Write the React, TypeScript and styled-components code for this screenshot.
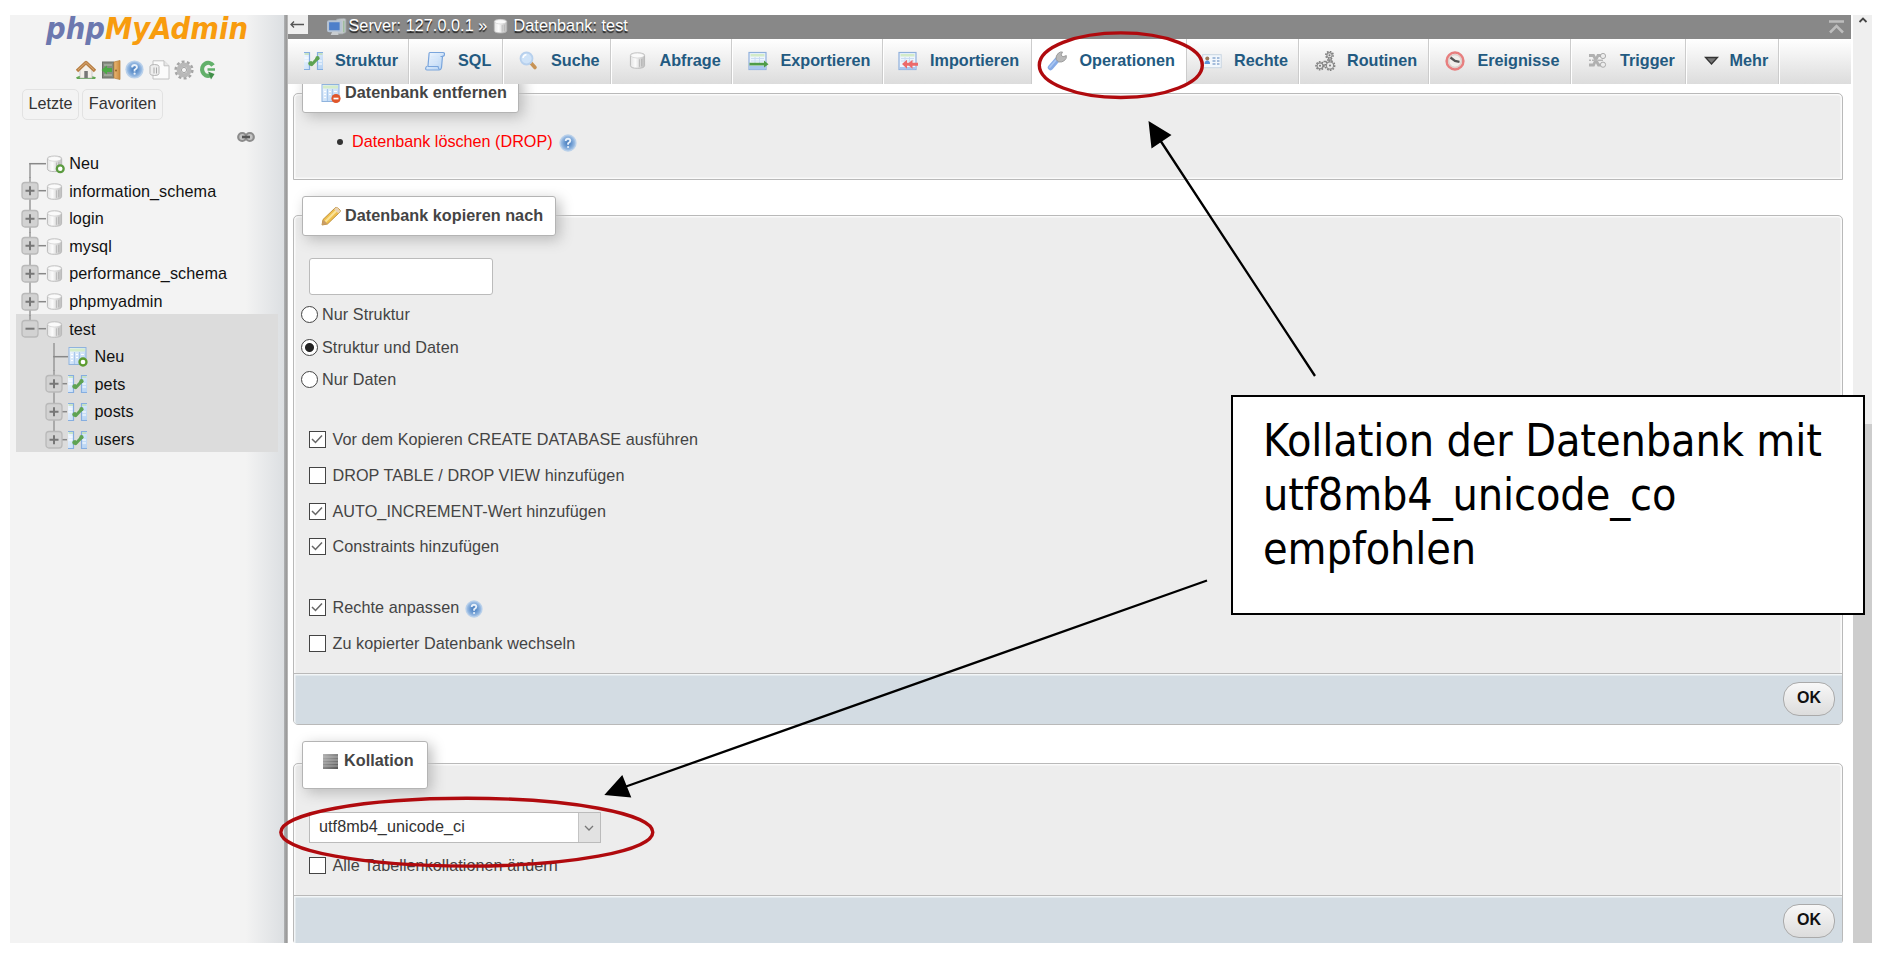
import React from "react";
import styled, { createGlobalStyle, css } from "styled-components";

const Global = createGlobalStyle`
  * { box-sizing: border-box; }
  body { margin: 0; background: #fff; font-family: "Liberation Sans", Arial, sans-serif; font-size: 16.2px; color: #444; }
`;

const Page = styled.div`
  position: relative;
  width: 1890px;
  height: 954px;
  padding: 15px 18px 11px 10px;
  overflow: hidden;
  background: #fff;
`;

const Window = styled.div`
  display: flex;
  height: 928px;
`;

/* ---------- Navigation ---------- */

const Sidebar = styled.aside`
  width: 274px;
  flex: none;
  display: flex;
  flex-direction: column;
  background: linear-gradient(90deg, #f3f3f3 0, #f3f3f3 86%, #dcdfe2 100%);
  color: #111;
`;

const Divider = styled.div`
  width: 4px;
  flex: none;
  background: linear-gradient(90deg, #b0b2b4, #999 60%, #c4c4c4);
`;

const Logo = styled.svg`
  display: block;
  margin-left: 34px;
  flex: none;
  overflow: visible;
`;

const IconBar = styled.div`
  display: flex;
  gap: 4.6px;
  height: 20px;
  margin: 8.5px 0 0 66px;
`;

const Shortcuts = styled.div`
  display: flex;
  gap: 3px;
  margin: 9px 0 0 12px;
`;

const Shortcut = styled.button<{ $w: number }>`
  width: ${(p) => p.$w}px;
  height: 31px;
  padding: 0 0 1px;
  border: 1.5px solid #e2e2e2;
  border-radius: 5px;
  background: #f3f3f3;
  color: #333;
  font: inherit;
`;

const LinkRow = styled.div`
  display: flex;
  justify-content: flex-end;
  height: 12px;
  margin: 11px 29px 7.3px 0;
`;

const Tree = styled.ul`
  list-style: none;
  margin: 0;
  padding: 0;
  letter-spacing: 0.07px;
`;

const Selected = styled.li`
  margin: -1px 6px 0 6px;
  padding-top: 1px;
  height: 138px;
  background: #dcdcdc;

  & > ul > li { margin-left: -6px; }
`;

const Row = styled.li<{ $nested?: boolean }>`
  display: flex;
  align-items: center;
  height: 27.6px;
  padding-left: ${(p) => (p.$nested ? 35 : 10.7)}px;
  white-space: nowrap;
  color: #111;
`;

const RowText = styled.span<{ $gap: number }>`
  margin-left: ${(p) => p.$gap}px;
`;

/* ---------- Main column ---------- */

const Main = styled.main`
  width: 1563px;
  flex: none;
  display: flex;
  flex-direction: column;
`;

const Crumbs = styled.header`
  display: flex;
  align-items: flex-start;
  height: 24px;
  flex: none;
  background: #888;
  color: #fff;
  text-shadow: 0 1.5px 1px #222;
`;

const BackBox = styled.div`
  width: 20px;
  height: 19px;
  margin-right: 19px;
  background: #efefef;
`;

const CrumbText = styled.span<{ $w: number }>`
  width: ${(p) => p.$w}px;
  padding-left: 1.5px;
  line-height: 20.5px;
  letter-spacing: 0.06px;
  white-space: nowrap;
`;

const ToTop = styled.div`
  margin: 4px 7px 0 auto;
  height: 14px;
`;

const Tabs = styled.nav`
  display: flex;
  height: 45px;
  flex: none;
  background: linear-gradient(#fff, #dcdcdc);
`;

const Tab = styled.a<{ $w: number; $icon: number; $active?: boolean }>`
  display: flex;
  align-items: center;
  width: ${(p) => p.$w}px;
  padding-left: ${(p) => p.$icon}px;
  padding-bottom: 1.5px;
  color: #235a81;
  font-weight: bold;
  white-space: nowrap;
  border-right: 1.5px solid #fff;
  box-shadow: inset -1px 0 0 #ccc;
  ${(p) =>
    p.$active &&
    css`
      background: #fff;
      box-shadow: none;
      border-right: 1px solid #ccc;
    `}
`;

const TabIcon = styled.span<{ $w: number }>`
  width: ${(p) => p.$w}px;
  flex: none;
  display: flex;
`;

const Content = styled.div`
  flex: 1;
  min-height: 0;
  overflow: hidden;
  padding: 9px 8px 0 5px;
`;

const Panel = styled.section<{ $h: number; $mt?: number; $square?: boolean }>`
  height: ${(p) => p.$h}px;
  margin-top: ${(p) => p.$mt ?? 0}px;
  display: flex;
  flex-direction: column;
  border: 1.5px solid #b9b9b9;
  border-radius: ${(p) => (p.$square ? "5px 5px 0 0" : "5px")};
  box-shadow: inset 0 0 0 1.5px #fafafa;
  background: #ededed;
`;

const Legend = styled.h2<{ $w: number; $h: number; $up: number; $tp: number }>`
  display: flex;
  align-items: flex-start;
  flex: none;
  width: ${(p) => p.$w}px;
  height: ${(p) => p.$h}px;
  margin: ${(p) => -p.$up}px 0 0 8px;
  padding: ${(p) => p.$tp}px 0 0 18px;
  border: 1.5px solid #b4b4b4;
  border-radius: 3px;
  background: #fff;
  box-shadow: 4px 4px 14px #bbb;
  color: #444;
  font-size: 16.2px;
  line-height: 19px;
  letter-spacing: 0.05px;
  font-weight: bold;
  white-space: nowrap;
`;

const LegendText = styled.span`
  margin-left: 4px;
`;

const Drop = styled.div`
  display: flex;
  align-items: center;
  height: 24px;
  margin: 16.5px 0 0 43px;
  color: #f00;
`;

const Bullet = styled.span`
  width: 6px;
  height: 6px;
  margin-right: 9px;
  border-radius: 50%;
  background: #333;
`;

const HelpGap = styled.span`
  margin: 2px 0 0 6px;
  display: flex;
`;

const NameInput = styled.input`
  width: 184px;
  height: 37px;
  flex: none;
  margin: 22.5px 0 3px 15px;
  border: 1.5px solid #bbb;
  border-radius: 3px;
  background: #fff;
`;

const Option = styled.label<{ $h: number; $radio?: boolean; $mt?: number }>`
  display: flex;
  align-items: center;
  flex: none;
  height: ${(p) => p.$h}px;
  margin-top: ${(p) => p.$mt ?? 0}px;
  padding-left: ${(p) => (p.$radio ? 7 : 14.5)}px;
  letter-spacing: 0.05px;
  white-space: nowrap;
`;

const OptionText = styled.span<{ $gap: number }>`
  margin-left: ${(p) => p.$gap}px;
`;

const Radio = styled.span<{ $on?: boolean }>`
  width: 17px;
  height: 17px;
  border: 1.5px solid #444;
  border-radius: 50%;
  background: ${(p) => (p.$on ? "radial-gradient(circle, #222 4px, #fff 5px)" : "#fff")};
`;

const Box = styled.span`
  display: flex;
  width: 17px;
  height: 17px;
  border: 1.5px solid #444;
  background: #fff;
`;

const Footer = styled.footer<{ $open?: boolean }>`
  display: flex;
  justify-content: flex-end;
  align-items: flex-start;
  margin-top: auto;
  height: ${(p) => (p.$open ? 49 : 51)}px;
  flex: none;
  padding: 8px 7px 0 0;
  border-top: 1.5px solid #b9b9b9;
  border-radius: ${(p) => (p.$open ? "0" : "0 0 4px 4px")};
  background: #d3dce3;
  box-shadow: inset 1.5px 1.5px 0 #f2f5f7;
`;

const OkButton = styled.button`
  width: 52px;
  height: 34px;
  padding: 0 0 2px;
  border: 1.5px solid #aaa;
  border-radius: 16px;
  background: linear-gradient(#f8f8f8, #dcdcdc);
  color: #111;
  font: bold 16px "Liberation Sans", Arial, sans-serif;
`;

const Select = styled.div`
  display: flex;
  flex: none;
  width: 292px;
  height: 31px;
  margin: 23.5px 0 0 14.5px;
  border: 1.5px solid #bbb;
  background: #fff;
  color: #333;
  line-height: 27px;
  letter-spacing: 0.05px;
  padding-left: 9.5px;
`;

const SelectArrow = styled.span`
  display: flex;
  align-items: center;
  justify-content: center;
  width: 22px;
  margin-left: auto;
  background: #e2e2e2;
  border-left: 1px solid #c4c4c4;
`;

/* ---------- Scroll bar ---------- */

const ScrollTrack = styled.div`
  display: flex;
  flex-direction: column;
  align-items: center;
  width: 19px;
  margin-left: 2px;
  flex: none;
  background: #efefef;
`;

const ScrollThumb = styled.div`
  width: 100%;
  flex: none;
  height: 519px;
  margin-top: auto;
  background: #cdcdcd;
`;

/* ---------- Annotations ---------- */

const Marks = styled.svg`
  position: absolute;
  left: 0;
  top: 0;
  pointer-events: none;
`;

const Callout = styled.div`
  position: absolute;
  left: 1231px;
  top: 395px;
  width: 634px;
  height: 220px;
  padding: 17px 0 0 30px;
  border: 2.3px solid #000;
  background: #fff;
  color: #000;
  font-family: "DejaVu Sans Condensed", "DejaVu Sans", sans-serif;
  font-stretch: condensed;
  font-size: 44.5px;
  line-height: 54px;
  letter-spacing: -0.12px;
  white-space: pre;
`;

/* ---------- Icons ---------- */

const Svg = ({ w = 20, h = 20, vb, children }: { w?: number; h?: number; vb?: string; children: React.ReactNode }) => (
  <svg width={w} height={h} viewBox={vb ?? "0 0 20 20"} style={{ flex: "none" }}>
    {children}
  </svg>
);

const Defs = () => (
  <svg width="0" height="0" style={{ position: "absolute" }}>
    <defs>
      <linearGradient id="cyl"><stop offset="0" stopColor="#e4e4e4" /><stop offset=".35" stopColor="#fbfbfb" /><stop offset="1" stopColor="#bdbdbd" /></linearGradient>
      <linearGradient id="blue" x2="1" y2="1"><stop offset="0" stopColor="#f2f8ff" /><stop offset="1" stopColor="#b4d2f3" /></linearGradient>
      <radialGradient id="help"><stop offset="0" stopColor="#4377b8" /><stop offset=".55" stopColor="#6f9dd3" /><stop offset="1" stopColor="#a5c3e6" /></radialGradient>
      <linearGradient id="bars" x2="1" y2="1"><stop offset="0" stopColor="#b5b5b5" /><stop offset="1" stopColor="#555" /></linearGradient>
      <linearGradient id="door"><stop offset="0" stopColor="#e9b878" /><stop offset="1" stopColor="#c98a3c" /></linearGradient>
    </defs>
  </svg>
);

const Cylinder = () => (
  <>
    <path d="M2.5 5Q2.5 2.200 10 2.200T17.500 5V15.500Q17.500 18.500 10 18.500T2.500 15.500Z" fill="url(#cyl)" stroke="#b8b8b8" strokeWidth="1" />
    <ellipse cx="10" cy="5" rx="7" ry="2.600" fill="#fafafa" stroke="#ccc" strokeWidth=".7" />
    <path d="M12 9v8M14.500 8.500v8" stroke="#999" strokeWidth="1" opacity=".6" />
  </>
);

const DbIcon = ({ w = 17 }: { w?: number }) => <Svg w={w} h={w + 2} vb="1 0.500 18 19.500"><Cylinder /></Svg>;

const DbNewIcon = () => (
  <Svg w={19} h={20} vb="1 0 20 21">
    <Cylinder />
    <circle cx="16" cy="15.500" r="3.600" fill="#fff" stroke="#5b9b3f" strokeWidth="2.400" />
  </Svg>
);

const TablePic = () => (
  <>
    <rect x="1" y="1.500" width="17" height="17" fill="url(#blue)" stroke="#8fb3dd" strokeWidth="1" />
    <rect x="2" y="2.500" width="15" height="3" fill="#d4ecc9" />
    <path d="M6.500 6v12M11.500 6v12" stroke="#a9c8ec" strokeWidth="1.200" />
    <path d="M3 8.500h2M3 11.500h2M3 14.500h2M8 8.500h2M8 11.500h2M13 8.500h3" stroke="#fff" strokeWidth="1.200" />
  </>
);

const TableNewIcon = () => (
  <Svg w={20} h={21} vb="0 0 20 21">
    <TablePic />
    <circle cx="15" cy="16" r="3.500" fill="#fff" stroke="#5d9c2f" strokeWidth="2.300" />
  </Svg>
);

const TableDropIcon = () => (
  <Svg w={20} h={21} vb="0 0 20 21">
    <TablePic />
    <circle cx="15" cy="15.500" r="4.600" fill="#e0562a" />
    <rect x="12.500" y="14.700" width="5" height="1.700" fill="#fff" />
  </Svg>
);

const StructIcon = () => (
  <Svg w={21} h={20} vb="0 0 21 20">
    <path d="M1 1.500h5.500v17H1zM14.500 1.500H20v17h-5.500z" fill="url(#blue)" />
    <path d="M1 1.500h5.500v17H1M20 1.500h-5.500v17H20" fill="none" stroke="#86aee0" strokeWidth="1.200" />
    <path d="M1.500 3h4.500M15 3h4.500" stroke="#bfe0b5" strokeWidth="1.600" />
    <path d="M1.500 7h4M1.500 10h4M15.500 10H19M15.500 13H19" stroke="#fff" strokeWidth="1.100" />
    <path d="M7 11l1.800 2.500L14.500 7.500" fill="none" stroke="#5fa352" strokeWidth="3.200" strokeLinejoin="round" />
    <circle cx="7.500" cy="12.500" r="2.200" fill="#5fa352" />
    <circle cx="14.500" cy="7.200" r="2.100" fill="#5fa352" />
  </Svg>
);

const HelpIcon = ({ w = 19 }: { w?: number }) => (
  <Svg w={w} h={w}>
    <circle cx="10" cy="10" r="9.600" fill="#b9d0ea" />
    <circle cx="10" cy="10" r="8.200" fill="url(#help)" />
    <path d="M7.400 7.800Q7.600 5.300 10 5.300t2.600 2.300Q12.600 9 10.100 10.400V12" fill="none" stroke="#e9f1fa" strokeWidth="2" />
    <circle cx="10.100" cy="14.400" r="1.200" fill="#e9f1fa" />
  </Svg>
);

const HomeIcon = () => (
  <Svg>
    <path d="M0 17.500q3-2.500 10-2t10 2l-1 1.500H1z" fill="#63a855" />
    <path d="M4 9.500L10 4l6 5.500V18H4z" fill="#f4efe8" stroke="#bbb" strokeWidth=".7" />
    <rect x="8.300" y="11" width="3.500" height="7" fill="#777" />
    <path d="M1 11L10 2.500 19 11" fill="none" stroke="#b98046" strokeWidth="3.400" strokeLinejoin="round" />
    <path d="M2 9.800L10 2.500 18 9.800" fill="none" stroke="#d8a972" strokeWidth="1" />
  </Svg>
);

const ExitIcon = () => (
  <Svg>
    <rect x="1.500" y="2" width="11" height="16" fill="#858b80" stroke="#6c7168" />
    <path d="M3 5h8M3 15h8" stroke="#a8b1a3" strokeWidth="1.500" />
    <path d="M13 2l6-1.500v19L13 18z" fill="url(#door)" stroke="#bd8743" strokeWidth=".8" />
    <path d="M0.500 10L6 5.500V8h5v4H6v2.500z" fill="#4caa45" />
    <circle cx="15" cy="10.500" r=".9" fill="#8a5b20" />
  </Svg>
);

const DocIcon = () => (
  <Svg w={21} h={20} vb="0 0 21 20">
    <path d="M4 .8h11l5 5V19H4z" fill="#fbfbfb" stroke="#c2c2c2" />
    <path d="M15 .8v5h5" fill="#e6e6e6" stroke="#c2c2c2" />
    <path d="M1 6.500Q1 4.500 5.500 4.500T10 6.500V13.500Q10 15.500 5.500 15.500T1 13.500Z" fill="#eee" stroke="#b5b5b5" />
    <path d="M5 7.500v6M7.500 7.500v6" stroke="#aaa" />
  </Svg>
);

const GearIcon = () => (
  <Svg>
    <circle cx="10" cy="10" r="8.300" fill="none" stroke="#a5a5a5" strokeWidth="2.600" strokeDasharray="2.900 2.315" />
    <circle cx="10" cy="10" r="5.300" fill="#e6e6e6" stroke="#b8b8b8" strokeWidth="4.200" />
    <circle cx="10" cy="10" r="2.600" fill="#f3f3f3" stroke="#9a9a9a" strokeWidth=".9" />
  </Svg>
);

const ReloadIcon = () => (
  <Svg w={17} h={20} vb="0 0 17 20">
    <path d="M14 5.500A6 6.500 0 1 0 11 15.500" fill="none" stroke="#62b06a" strokeWidth="4.200" />
    <path d="M8.500 9.500h7.500" stroke="#62b06a" strokeWidth="2.500" />
    <path d="M9 11.500l6.500 2.500-3.500 5.500z" fill="#418f49" />
  </Svg>
);

const LinkIcon = () => (
  <Svg w={18} h={12} vb="0 0 18 12">
    <rect x="1.200" y="2" width="8" height="8" rx="4" fill="#c4c4c4" stroke="#8c8c8c" strokeWidth="2.200" />
    <rect x="8.800" y="2" width="8" height="8" rx="4" fill="#c4c4c4" stroke="#8c8c8c" strokeWidth="2.200" />
    <path d="M5 6h8" stroke="#555" strokeWidth="2.600" />
  </Svg>
);

const Toggle = ({ minus }: { minus?: boolean }) => (
  <Svg w={18} h={28} vb="0 0 18 28">
    <rect x="1" y="5.500" width="16" height="16.500" rx="3" fill="#d2d2d2" stroke="#b9b9b9" strokeWidth="1.300" />
    <path d={minus ? "M4.500 13.700h9" : "M4.500 13.700h9M9 9.200v9"} stroke="#777" strokeWidth="2" />
  </Svg>
);

/* Connector lines of the tree, drawn around an optional toggle box */
const Branch = ({ up, down, minus, box = true, w = 25 }: { up?: boolean; down?: boolean; minus?: boolean; box?: boolean; w?: number }) => (
  <svg width={w} height="28" viewBox={`0 0 ${w} 28`} style={{ flex: "none" }}>
    {up && <path d="M9 0v14" stroke="#999" strokeWidth="1.500" />}
    {down && <path d="M9 13v15" stroke="#999" strokeWidth="1.500" />}
    <path d={`M${box ? 17 : 8.3} 13.700h${w}`} stroke="#888" strokeWidth="1.500" />
    {box && <Toggle minus={minus} />}
  </svg>
);

const ServerIcon = () => (
  <Svg w={19} h={18} vb="0 0 19 18">
    <path d="M9 1.500l7-1 2 1V14l-3 1.500H9z" fill="#c3c8cb" stroke="#9ea3a6" strokeWidth=".8" />
    <path d="M16 3v11" stroke="#8fb88a" />
    <rect x="1" y="3.500" width="12" height="9.500" rx="1" fill="#4d7fca" stroke="#b5c3d4" strokeWidth="2" />
    <path d="M5 13.500h5l1 3H3.500z" fill="#c9cdd0" />
  </Svg>
);

const SqlIcon = () => (
  <Svg>
    <path d="M5 1.500h13q1.500 0 1.500 1.800t-2 2L16.500 16.500q-.500 2.500-2.500 2.500H2Q0.500 19 .7 17t2.300-2L4 3.500Q4 1.500 5 1.500z" fill="url(#blue)" stroke="#7aa5dc" strokeWidth="1.200" />
    <path d="M3 15.500h10q.500 2.500 1.500 3M15.500 5.500h2" fill="none" stroke="#7aa5dc" strokeWidth="1.200" />
    <path d="M6 6h7M5.800 9h7M5.500 12h7" stroke="#d7e7fa" strokeWidth="1" />
  </Svg>
);

const SearchIcon = () => (
  <Svg w={19} h={20} vb="0 0 19 20">
    <path d="M12 12l4 4.500" stroke="#c79355" strokeWidth="3.600" strokeLinecap="round" />
    <circle cx="7.500" cy="7.500" r="6" fill="#cfe3f8" stroke="#b7d0ed" strokeWidth="1.800" />
    <path d="M4 7q.500-3 3.500-3.500" stroke="#fff" strokeWidth="1.500" fill="none" />
  </Svg>
);

const SheetPic = () => (
  <>
    <rect x="1" y="1.500" width="17" height="17" fill="#edf5fd" stroke="#8fb0dc" strokeWidth="1.200" />
    <rect x="2.500" y="3" width="14" height="2.500" fill="#d3ebc8" />
    <path d="M3 7.500h13M3 10h13M7 6v6M11.500 6v6" stroke="#c9dcf2" strokeWidth="1" />
  </>
);

const ExportIcon = () => (
  <Svg w={21} h={20} vb="0 0 21 20">
    <SheetPic />
    <rect x="1.500" y="15" width="16" height="3.500" fill="#a9c6ee" />
    <path d="M1.500 11.800H16V9.500l4.500 3.700-4.500 3.300v-2H1.500z" fill="#4f9c48" />
  </Svg>
);

const ImportIcon = () => (
  <Svg w={21} h={20} vb="0 0 21 20">
    <SheetPic />
    <rect x="1.500" y="16" width="16" height="2.500" fill="#a9c6ee" />
    <path d="M4 13l5-4.300v3h2L14.500 8.700v3h5.500v3h-5.500v3L11 14.700H9v3z" fill="#ec6a6a" />
  </Svg>
);

const WrenchIcon = () => (
  <Svg>
    <path d="M10 9L3.500 16.500" stroke="#86abe6" strokeWidth="5.500" strokeLinecap="round" />
    <path d="M9.500 8.500L3 16" stroke="#a9c6f2" strokeWidth="1.800" strokeLinecap="round" />
    <path d="M9 8.500Q8.500 4.500 11.500 2 13.500.5 15.500 1L14 4l2 1.800 3.300-1.200Q20 7.500 17.500 9.500 15 11.500 11.800 11z" fill="#b9b9b9" stroke="#969696" strokeWidth=".9" />
  </Svg>
);

const RightsIcon = () => (
  <Svg w={20} h={20}>
    <rect x=".7" y="3.700" width="18.500" height="13" fill="#f2f7fc" stroke="#c8d5e2" />
    <circle cx="5.300" cy="7.500" r="2" fill="#9a7a5a" />
    <path d="M2.500 13q0-3.500 2.800-3.500T8 13z" fill="#5c95dd" />
    <path d="M10.500 7h3M15 7h2.500M10.500 10h3M15 10h2.500M10.500 13h3M15 13h2.500" stroke="#8aa9cf" strokeWidth="1.300" />
  </Svg>
);

const RoutinesIcon = () => (
  <Svg w={21} h={20} vb="0 0 21 20">
    {[[14.5, 4.2, 2.9], [15, 14.5, 3.9], [5, 14.8, 3.2]].map(([x, y, r]) => (
      <g key={x}>
        <circle cx={x} cy={y} r={r + 0.7} fill="none" stroke="#808080" strokeWidth="1.700" strokeDasharray="1.600 1.200" />
        <circle cx={x} cy={y} r={r - 0.3} fill="#e8e8e8" stroke="#8a8a8a" strokeWidth="1.100" />
        <circle cx={x} cy={y} r="1" fill="#777" />
      </g>
    ))}
    <path d="M8.500 10.500h3M12 9h5" stroke="#888" strokeWidth="1.300" />
  </Svg>
);

const EventsIcon = () => (
  <Svg>
    <circle cx="10" cy="10" r="8.400" fill="#f1efec" stroke="#e77f7f" strokeWidth="2.500" />
    <circle cx="10" cy="10" r="6.300" fill="none" stroke="#c9b9b5" strokeWidth=".8" />
    <path d="M5.500 6.500L10 10l4.500.800" fill="none" stroke="#555" strokeWidth="2.300" />
  </Svg>
);

const TriggerIcon = () => (
  <Svg w={19} h={20} vb="0 0 19 20">
    <path d="M1 4.500h4.500l5 9.500H14M1 14h4.500L10 4.500h4" fill="none" stroke="#b0b0b0" strokeWidth="2.800" />
    <path d="M1 9.200h8" stroke="#b5b5b5" strokeWidth="1.500" strokeDasharray="2 1" />
    <circle cx="15" cy="5" r="2.600" fill="#ececec" stroke="#ababab" />
    <circle cx="15" cy="13.700" r="2.600" fill="#ececec" stroke="#ababab" />
    <path d="M10 9.300h5" stroke="#b5b5b5" strokeWidth="1.500" />
  </Svg>
);

const MoreIcon = () => (
  <Svg w={15} h={20} vb="0 0 15 20"><path d="M1.500 6.500h12L7.500 13z" fill="#777" stroke="#333" strokeWidth="1.300" /></Svg>
);

const PencilIcon = () => (
  <Svg>
    <path d="M1 19l1-5.500L14 2q1-1 2.500-.2L19 4q.8 1-.2 2.200L6.500 18z" fill="#f0c04d" stroke="#b98a35" strokeWidth=".9" />
    <path d="M4.500 15.500L16 4" stroke="#fae39a" strokeWidth="2" />
    <path d="M1 19l1-5.500 4.500 4.500z" fill="#c89c68" />
    <path d="M13 3l4.500 4.500L19.300 5 16 1.300z" fill="#e9d2b4" />
  </Svg>
);

const CollationIcon = () => (
  <Svg w={19} h={20} vb="0 0 19 20">
    <rect x="2" y="3" width="15" height="15" fill="url(#bars)" />
    <path d="M2 6h15M2 9h15M2 12h15M2 15h15" stroke="#c4c4c4" strokeWidth=".7" />
  </Svg>
);

/* ---------- Pieces ---------- */

const databases = ["information_schema", "login", "mysql", "performance_schema", "phpmyadmin"];
const tables = ["pets", "posts", "users"];

const tabs = [
  { label: "Struktur", w: 122, pad: 14.5, icon: <StructIcon />, gap: 32.5 },
  { label: "SQL", w: 93.5, pad: 15, icon: <SqlIcon />, gap: 33 },
  { label: "Suche", w: 108.5, pad: 15.5, icon: <SearchIcon />, gap: 32 },
  { label: "Abfrage", w: 121, pad: 16.5, icon: <DbIcon w={17} />, gap: 31 },
  { label: "Exportieren", w: 150.5, pad: 15, icon: <ExportIcon />, gap: 32.5 },
  { label: "Importieren", w: 149.5, pad: 14.5, icon: <ImportIcon />, gap: 32 },
  { label: "Operationen", w: 154, pad: 13.5, icon: <WrenchIcon />, gap: 33 , active: true },
  { label: "Rechte", w: 112.5, pad: 15, icon: <RightsIcon />, gap: 32 },
  { label: "Routinen", w: 130.5, pad: 15.5, icon: <RoutinesIcon />, gap: 32 },
  { label: "Ereignisse", w: 141.5, pad: 14.5, icon: <EventsIcon />, gap: 33 },
  { label: "Trigger", w: 115, pad: 16.5, icon: <TriggerIcon />, gap: 32 },
  { label: "Mehr", w: 93.5, pad: 17.5, icon: <MoreIcon />, gap: 25.5 },
];

const Check = ({ label, on, h = 35.7, mt, help }: { label: string; on?: boolean; h?: number; mt?: number; help?: boolean }) => (
  <Option $h={h} $mt={mt}>
    <Box>{on && <svg width="14" height="14" viewBox="0 0 14 14"><path d="M2 7l3.500 3.500L12 3.500" fill="none" stroke="#666" strokeWidth="1.500" /></svg>}</Box>
    <OptionText $gap={7}>{label}</OptionText>
    {help && <HelpGap><HelpIcon w={18} /></HelpGap>}
  </Option>
);

export default function App() {
  return (
    <Page>
      <Global />
      <Defs />
      <Window>
        <Sidebar>
          <Logo width="208" height="36" viewBox="0 0 208 36">
            <text x="2" y="24" textLength="202" lengthAdjust="spacingAndGlyphs" fontFamily="DejaVu Sans Condensed, DejaVu Sans" fontStretch="condensed" fontWeight="bold" fontStyle="italic" fontSize="29.500">
              <tspan fill="#6c78af">php</tspan><tspan fill="#f89c0e">MyAdmin</tspan>
            </text>
          </Logo>
          <IconBar><HomeIcon /><ExitIcon /><HelpIcon /><DocIcon /><GearIcon /><ReloadIcon /></IconBar>
          <Shortcuts><Shortcut $w={57}>Letzte</Shortcut><Shortcut $w={81}>Favoriten</Shortcut></Shortcuts>
          <LinkRow><LinkIcon /></LinkRow>
          <Tree>
            <Row><Branch box={false} down /><DbNewIcon /><RowText $gap={4.5}>Neu</RowText></Row>
            {databases.map((d) => (
              <Row key={d}><Branch up down /><DbIcon /><RowText $gap={6.5}>{d}</RowText></Row>
            ))}
            <Selected>
              <Tree>
                <Row as="li"><Branch up minus /><DbIcon /><RowText $gap={6.5}>test</RowText></Row>
                <Row $nested><Branch box={false} up down w={23} /><TableNewIcon /><RowText $gap={6.5}>Neu</RowText></Row>
                {tables.map((t, i) => (
                  <Row key={t} $nested><Branch up down={i < tables.length - 1} w={22} /><StructIcon /><RowText $gap={6.5}>{t}</RowText></Row>
                ))}
              </Tree>
            </Selected>
          </Tree>
        </Sidebar>
        <Divider />
        <Main>
          <Crumbs>
            <BackBox>
              <Svg w={20} h={19} vb="0 0 20 19"><path d="M16 9.500H3M6 6.500L3 9.500l3 3" fill="none" stroke="#555" strokeWidth="1.300" /></Svg>
            </BackBox>
            <Svg w={20} h={20} vb="0 -2 19 18"><g><ServerIcon /></g></Svg>
            <CrumbText $w={145.5}>Server: 127.0.0.1 »</CrumbText>
            <Svg w={15} h={21} vb="1 -1.500 18 22"><Cylinder /></Svg>
            <CrumbText $w={140}>&nbsp;Datenbank: test</CrumbText>
            <ToTop>
              <Svg w={15} h={14} vb="0 0 15 14"><path d="M0 1.500h15M1 12.500L7.500 6l6.500 6.500" fill="none" stroke="#bdbdbd" strokeWidth="2.500" /></Svg>
            </ToTop>
          </Crumbs>
          <Tabs>
            {tabs.map((t) => (
              <Tab key={t.label} $w={t.w} $icon={t.pad} $active={t.active}>
                <TabIcon $w={t.gap}>{t.icon}</TabIcon>
                {t.label}
              </Tab>
            ))}
          </Tabs>
          <Content>
            <Panel $h={87} $square>
              <Legend $w={217} $h={40} $up={21} $tp={9}><TableDropIcon /><LegendText>Datenbank entfernen</LegendText></Legend>
              <Drop><Bullet />Datenbank löschen (DROP)<HelpGap><HelpIcon w={18} /></HelpGap></Drop>
            </Panel>
            <Panel $h={510} $mt={34.5}>
              <Legend $w={254} $h={40} $up={20} $tp={9}><PencilIcon /><LegendText>Datenbank kopieren nach</LegendText></Legend>
              <NameInput />
              <Option $h={32.7} $radio><Radio /><OptionText $gap={4}>Nur Struktur</OptionText></Option>
              <Option $h={32.7} $radio><Radio $on /><OptionText $gap={4}>Struktur und Daten</OptionText></Option>
              <Option $h={32.7} $radio><Radio /><OptionText $gap={4}>Nur Daten</OptionText></Option>
              <Check label="Vor dem Kopieren CREATE DATABASE ausführen" on mt={26} />
              <Check label="DROP TABLE / DROP VIEW hinzufügen" />
              <Check label="AUTO_INCREMENT-Wert hinzufügen" on />
              <Check label="Constraints hinzufügen" on />
              <Check label="Rechte anpassen" on mt={25} help />
              <Check label="Zu kopierter Datenbank wechseln" />
              <Footer><OkButton>OK</OkButton></Footer>
            </Panel>
            <Panel $h={182} $mt={38}>
              <Legend $w={126} $h={48} $up={23} $tp={9}><CollationIcon /><LegendText>Kollation</LegendText></Legend>
              <Select>utf8mb4_unicode_ci
                <SelectArrow><svg width="10" height="8" viewBox="0 0 10 8"><path d="M1 2l4 4 4-4" fill="none" stroke="#777" strokeWidth="1.300" /></svg></SelectArrow>
              </Select>
              <Check label="Alle Tabellenkollationen ändern" mt={5} />
              <Footer $open><OkButton>OK</OkButton></Footer>
            </Panel>
          </Content>
        </Main>
        <ScrollTrack>
          <Svg w={10} h={10} vb="0 0 10 10"><path d="M1.500 7L5 3.500 8.500 7" fill="none" stroke="#444" strokeWidth="1.800" /></Svg>
          <ScrollThumb />
        </ScrollTrack>
      </Window>
      <Marks width="1890" height="954" viewBox="0 0 1890 954">
        <ellipse cx="1120.800" cy="65.200" rx="81.500" ry="32.300" fill="none" stroke="#b00a0e" strokeWidth="3.400" />
        <ellipse cx="466.800" cy="832.200" rx="186" ry="33.900" fill="none" stroke="#b00a0e" strokeWidth="3.400" />
        <path d="M1315 376L1160 140M1207 580.500L626 786.500" stroke="#000" strokeWidth="2.300" />
        <path d="M1148.500 121l23 14-20 13.500zM604.300 795l18-20 9 22.500z" fill="#000" />
      </Marks>
      <Callout>{"Kollation der Datenbank mit\nutf8mb4_unicode_co\nempfohlen"}</Callout>
    </Page>
  );
}
